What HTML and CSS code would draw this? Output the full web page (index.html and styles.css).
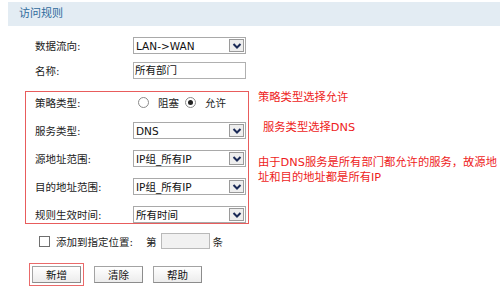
FILE: index.html
```html
<!DOCTYPE html>
<html lang="zh-CN">
<head>
<meta charset="utf-8">
<title>访问规则</title>
<link rel="stylesheet" href="styles.css">
</head>
<body>
<div class="header">访问规则</div>
<div class="form">
  <div class="row outer">
    <span class="label">数据流向:</span>
    <div class="select"><span class="val">LAN-&gt;WAN</span><span class="arrow"><svg width="12" height="10" viewBox="0 0 12 10"><path d="M2.5 3 L6 6.5 L9.5 3" fill="none" stroke="#1b2a57" stroke-width="2"/></svg></span></div>
  </div>
  <div class="row outer second">
    <span class="label">名称:</span>
    <div class="input">所有部门</div>
  </div>

  <div class="group">
    <div class="box">
      <div class="row">
        <span class="label">策略类型:</span>
        <span class="radio"></span><span class="rtext">阻塞</span>
        <span class="radio on"></span><span class="rtext">允许</span>
      </div>
      <div class="row">
        <span class="label">服务类型:</span>
        <div class="select"><span class="val">DNS</span><span class="arrow"><svg width="12" height="10" viewBox="0 0 12 10"><path d="M2.5 3 L6 6.5 L9.5 3" fill="none" stroke="#1b2a57" stroke-width="2"/></svg></span></div>
      </div>
      <div class="row">
        <span class="label">源地址范围:</span>
        <div class="select"><span class="val">IP组_所有IP</span><span class="arrow"><svg width="12" height="10" viewBox="0 0 12 10"><path d="M2.5 3 L6 6.5 L9.5 3" fill="none" stroke="#1b2a57" stroke-width="2"/></svg></span></div>
      </div>
      <div class="row">
        <span class="label">目的地址范围:</span>
        <div class="select"><span class="val">IP组_所有IP</span><span class="arrow"><svg width="12" height="10" viewBox="0 0 12 10"><path d="M2.5 3 L6 6.5 L9.5 3" fill="none" stroke="#1b2a57" stroke-width="2"/></svg></span></div>
      </div>
      <div class="row">
        <span class="label">规则生效时间:</span>
        <div class="select"><span class="val">所有时间</span><span class="arrow"><svg width="12" height="10" viewBox="0 0 12 10"><path d="M2.5 3 L6 6.5 L9.5 3" fill="none" stroke="#1b2a57" stroke-width="2"/></svg></span></div>
      </div>
    </div>
    <div class="notes">
      <p class="note n1">策略类型选择允许</p>
      <p class="note n2">服务类型选择DNS</p>
      <p class="note n3">由于DNS服务是所有部门都允许的服务，故源地<br>址和目的地址都是所有IP</p>
    </div>
  </div>

  <div class="row checkrow">
    <span class="check"></span>
    <span class="ctext">添加到指定位置:</span>
    <span class="di">第</span>
    <div class="small-input"></div>
    <span class="tiao">条</span>
  </div>

  <div class="buttons">
    <div class="hl"><span class="btn">新增</span></div>
    <span class="btn">清除</span>
    <span class="btn">帮助</span>
  </div>
</div>
</body>
</html>
```

FILE: styles.css
```css
html, body {
  margin: 0;
  padding: 0;
  background: #ffffff;
}
body {
  width: 500px;
  height: 288px;
  overflow: hidden;
  font-family: "DejaVu Sans", "Noto Sans CJK SC", sans-serif;
  font-size: 10.5px;
  color: #222;
}
.header {
  margin: 2px 0 0 8px;
  height: 24px;
  line-height: 24px;
  padding-left: 11px;
  background: #e3ecf3;
  color: #2f6a9c;
  font-size: 11px;
}
.form {
  padding-left: 25px;
}
.row {
  display: flex;
  align-items: center;
  height: 17px;
}
.outer {
  padding-left: 10px;
  margin-top: 11px;
}
.outer.second {
  margin-top: 8px;
}
.label {
  width: 98px;
  flex: none;
  white-space: nowrap;
}
.select {
  width: 113px;
  height: 17px;
  box-sizing: border-box;
  border: 1px solid #a9a9a9;
  display: flex;
  align-items: center;
  background: #fff;
}
.select .val {
  flex: 1;
  padding-left: 2px;
  white-space: nowrap;
  color: #111;
}
.select .arrow {
  width: 15px;
  height: 13px;
  margin-right: 1px;
  box-sizing: border-box;
  border: 1px solid #9a9a9a;
  background: #eeeeee;
  display: flex;
  align-items: center;
  justify-content: center;
}
.input {
  width: 113px;
  height: 17px;
  box-sizing: border-box;
  border: 1px solid #b0b0b0;
  padding-left: 1px;
  line-height: 15px;
  color: #111;
}
.group {
  display: flex;
  align-items: flex-start;
  margin-top: 12px;
}
.box {
  width: 224px;
  box-sizing: border-box;
  border: 1px solid #e85c5c;
  padding: 2px 0 0 9px;
  display: flex;
  flex-direction: column;
  gap: 11px;
}
.radio {
  width: 9px;
  height: 9px;
  border: 1px solid #8a8a8a;
  border-radius: 50%;
  margin-left: 5px;
  position: relative;
  flex: none;
  background: #fff;
}
.radio.on::after {
  content: "";
  position: absolute;
  left: 2px;
  top: 2px;
  width: 5px;
  height: 5px;
  border-radius: 50%;
  background: #222;
}
.rtext {
  margin-left: 9px;
  margin-right: 1px;
}
.notes {
  margin-left: 9px;
  color: #ee1c1c;
  font-size: 11.3px;
}
.note {
  margin: 0;
  white-space: nowrap;
}
.n1 {
  line-height: 14px;
}
.n2 {
  line-height: 14px;
  margin-top: 16px;
  padding-left: 5px;
}
.n3 {
  line-height: 15px;
  margin-top: 20px;
}
.checkrow {
  margin-top: 9px;
  padding-left: 14px;
  height: 16px;
}
.check {
  width: 9px;
  height: 9px;
  border: 1px solid #6f6f6f;
  background: #fff;
  flex: none;
}
.ctext {
  margin-left: 6px;
}
.di {
  margin-left: 13px;
}
.small-input {
  width: 49px;
  height: 16px;
  box-sizing: border-box;
  border: 1px solid #b9b9b9;
  background: #f1f1f1;
  margin-left: 4px;
}
.tiao {
  margin-left: 3px;
}
.buttons {
  display: flex;
  align-items: center;
  margin-top: 14px;
  padding-left: 4px;
}
.hl {
  border: 1px solid #ea6a6a;
  padding: 2px;
  display: flex;
}
.btn {
  width: 49px;
  height: 17px;
  box-sizing: border-box;
  border: 1px solid #a3a3a3;
  border-right-color: #8c8c8c;
  border-bottom-color: #8c8c8c;
  background: linear-gradient(#ffffff, #ececec);
  display: flex;
  align-items: center;
  justify-content: center;
  color: #111;
  margin-left: 10px;
}
.hl .btn {
  margin-left: 0;
}
```
